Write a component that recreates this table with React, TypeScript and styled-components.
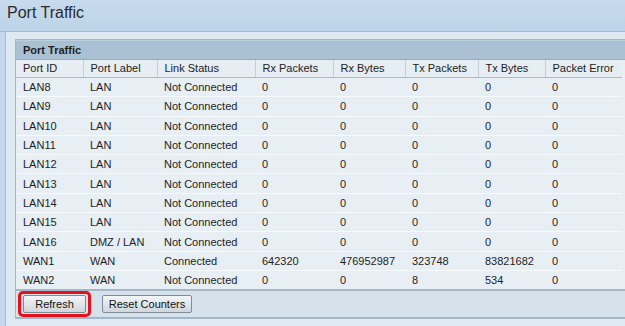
import React from "react";
import styled, { createGlobalStyle } from "styled-components";

const Global = createGlobalStyle`
  html, body { margin: 0; padding: 0; }
  body {
    width: 625px;
    height: 326px;
    overflow: hidden;
    background: #c3d8ea;
    font-family: "Liberation Sans", Arial, Helvetica, sans-serif;
    color: #222;
  }
`;

const Page = styled.div`
  width: 625px;
  height: 326px;
  display: flex;
  flex-direction: column;
  background: linear-gradient(#c6dbed, #bcd3e7 32px, #c3d8ea 32px);
`;

const Title = styled.h1`
  margin: 0;
  height: 32px;
  box-sizing: border-box;
  padding: 3px 0 0 7px;
  font-size: 16px;
  font-weight: normal;
  color: #2b2b2b;
  line-height: 20px;
  border-bottom: 1px solid #a6bccd;
`;

const Panel = styled.div`
  flex: 1;
  margin-left: 5px;
  border-left: 1px solid #a9bccc;
  background: #dfe9f2;
  padding: 7px 0 0 9px;
`;

const Box = styled.div`
  border: 1px solid #a4b8c7;
  border-right: none;
  background: #e8eef4;
`;

const BoxHeader = styled.div`
  height: 18px;
  background: #a9c1d3;
  border-top: 1px solid #bcd0de;
  border-bottom: 1px solid #95adbf;
  padding-left: 7px;
  font-size: 11px;
  font-weight: bold;
  line-height: 18px;
  color: #1f1f1f;
`;

const Table = styled.table`
  width: 606px;
  border-collapse: collapse;
  table-layout: fixed;
  font-size: 11px;
`;

const Th = styled.th`
  height: 17px;
  padding: 0 0 0 7px;
  text-align: left;
  font-weight: normal;
  color: #222;
  background: #e6edf3;
  border-left: 1px solid #c3cfd9;
  border-bottom: 1px solid #a8bccb;
  line-height: 17px;
  &:first-child { border-left: none; }
`;

const Td = styled.td`
  height: 18.3px;
  padding: 0 0 0 7px;
  line-height: 18px;
  color: #1e1e1e;
  white-space: nowrap;
`;

const Tr = styled.tr`
  background: #e7eef4;
  border-top: 1px solid #f7fafc;
  &:first-child { border-top: none; }
`;

const Footer = styled.div`
  height: 26px;
  background: #d6e2eb;
  border-top: 2px solid #a3b7c6;
  border-bottom: 1px solid #a3b7c6;
  display: flex;
  align-items: center;
  padding-left: 2px;
  gap: 11px;
`;

const Highlight = styled.span`
  display: inline-flex;
  border: 3px solid #e3111b;
  border-radius: 5px;
  padding: 1px 2px;
`;

const Button = styled.button<{ $w: number }>`
  width: ${(p) => p.$w}px;
  height: 18px;
  padding: 0;
  font-family: "Liberation Sans", Arial, sans-serif;
  font-size: 11px;
  color: #111;
  border: 1px solid #7f8c96;
  border-radius: 2px;
  background: linear-gradient(#f4f6f8, #dfe4e8 55%, #cfd6dc);
`;

const cols = [67, 74, 98, 78, 72, 73, 67, 77];
const headers = ["Port ID", "Port Label", "Link Status", "Rx Packets", "Rx Bytes", "Tx Packets", "Tx Bytes", "Packet Error"];

const rows: string[][] = [
  ["LAN8", "LAN", "Not Connected", "0", "0", "0", "0", "0"],
  ["LAN9", "LAN", "Not Connected", "0", "0", "0", "0", "0"],
  ["LAN10", "LAN", "Not Connected", "0", "0", "0", "0", "0"],
  ["LAN11", "LAN", "Not Connected", "0", "0", "0", "0", "0"],
  ["LAN12", "LAN", "Not Connected", "0", "0", "0", "0", "0"],
  ["LAN13", "LAN", "Not Connected", "0", "0", "0", "0", "0"],
  ["LAN14", "LAN", "Not Connected", "0", "0", "0", "0", "0"],
  ["LAN15", "LAN", "Not Connected", "0", "0", "0", "0", "0"],
  ["LAN16", "DMZ / LAN", "Not Connected", "0", "0", "0", "0", "0"],
  ["WAN1", "WAN", "Connected", "642320", "476952987", "323748", "83821682", "0"],
  ["WAN2", "WAN", "Not Connected", "0", "0", "8", "534", "0"],
];

export default function App() {
  return (
    <>
      <Global />
      <Page>
        <Title>Port Traffic</Title>
        <Panel>
          <Box>
            <BoxHeader>Port Traffic</BoxHeader>
            <Table>
              <colgroup>
                {cols.map((w, i) => (
                  <col key={i} style={{ width: w }} />
                ))}
              </colgroup>
              <thead>
                <tr>
                  {headers.map((h) => (
                    <Th key={h}>{h}</Th>
                  ))}
                </tr>
              </thead>
              <tbody>
                {rows.map((r) => (
                  <Tr key={r[0]}>
                    {r.map((c, i) => (
                      <Td key={i}>{c}</Td>
                    ))}
                  </Tr>
                ))}
              </tbody>
            </Table>
            <Footer>
              <Highlight>
                <Button $w={63}>Refresh</Button>
              </Highlight>
              <Button $w={90}>Reset Counters</Button>
            </Footer>
          </Box>
        </Panel>
      </Page>
    </>
  );
}
